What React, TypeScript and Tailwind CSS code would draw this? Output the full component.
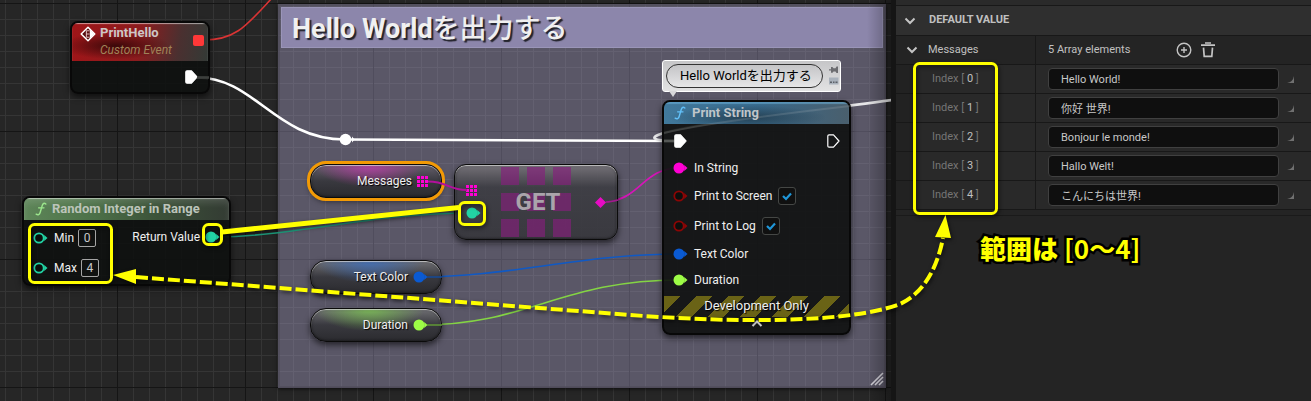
import React, { type ReactNode } from "react";

const MAGENTA = "#ff00d4";
const TEAL = "#22d3a4";
const BLUE = "#0a5ad2";
const LIME = "#9dfc46";
const MAROON = "#8c0505";

const messages = ["Hello World!", "你好 世界!", "Bonjour le monde!", "Hallo Welt!", "こんにちは世界!"];

function Pin({ color, hollow = false }: { color: string; hollow?: boolean }) {
  return (
    <svg width="15" height="12" viewBox="0 0 15 12" className="shrink-0" aria-hidden="true">
      <path d="M11.2 3 L14.5 6 L11.2 9 Z" fill={color} />
      {hollow ? (
        <circle cx="6" cy="6" r="4.7" fill="#0c0f0d" stroke={color} strokeWidth="1.8" />
      ) : (
        <circle cx="6" cy="6" r="5.5" fill={color} />
      )}
    </svg>
  );
}

function ExecPin({ filled = false }: { filled?: boolean }) {
  return (
    <svg width="13" height="14" viewBox="0 0 13 14" className="shrink-0" aria-hidden="true">
      <path
        d="M2 .8 H6.5 L12 7 L6.5 13.2 H2 Q.8 13.2 .8 12 V2 Q.8 .8 2 .8 Z"
        fill={filled ? "#fff" : "none"}
        stroke="#fff"
        strokeWidth="1.2"
        strokeLinejoin="round"
      />
    </svg>
  );
}

function ArrayPin() {
  return (
    <svg width="11" height="11" viewBox="0 0 11 11" className="shrink-0" aria-hidden="true">
      {[0, 4, 8].map((y) => [0, 4, 8].map((x) => <rect key={`${x}-${y}`} x={x} y={y} width="3" height="3" fill={MAGENTA} />))}
    </svg>
  );
}

function FunctionIcon({ color }: { color: string }) {
  return (
    <svg width="12" height="14" viewBox="0 0 12 14" fill="none" stroke={color} strokeWidth="1.5" strokeLinecap="round" aria-hidden="true">
      <path d="M10.8 2 C9.2 .6 7.8 1.4 7.2 3.6 L5.2 10.4 C4.6 12.7 3 13.4 1.2 12.2" />
      <path d="M3.6 5.8 H9" strokeWidth="1.3" />
    </svg>
  );
}

function Chevron() {
  return (
    <svg width="12" height="8" viewBox="0 0 12 8" fill="none" stroke="#c4c4c4" strokeWidth="2" aria-hidden="true">
      <path d="M1.5 1.5 L6 6 L10.5 1.5" />
    </svg>
  );
}

function Node({ className, children }: { className: string; children: ReactNode }) {
  return (
    <section
      className={`absolute overflow-hidden rounded-lg border-2 border-[#080808] bg-[#0e110f]/90 shadow-[0_3px_6px_rgba(0,0,0,0.6)] ${className}`}
    >
      {children}
    </section>
  );
}

const glass =
  "absolute flex items-center border border-[#0b0b0b] shadow-[inset_0_1px_1px_rgba(255,255,255,0.65),inset_0_0_3px_rgba(0,0,0,0.7),0_3px_6px_rgba(0,0,0,0.6)]";

function VariableNode({ name, className, children }: { name: string; className: string; children: ReactNode }) {
  return (
    <section className={`${glass} h-[34px] w-[132px] justify-end rounded-2xl pr-[13px] ${className}`}>
      <h3 className="mr-[5px] text-xs [text-shadow:1px_1px_1px_#000]">{name}</h3>
      {children}
    </section>
  );
}

function CheckRow({ id, label }: { id: string; label: string }) {
  return (
    <div className="flex items-center">
      <Pin color={MAROON} hollow />
      <label htmlFor={id} className="ml-1.5 text-xs">
        {label}
      </label>
      <span className="relative ml-1.5 flex">
        <input
          id={id}
          type="checkbox"
          defaultChecked
          className="peer size-[18px] appearance-none rounded-[3px] border border-[#454745] bg-[#101010]"
        />
        <svg
          viewBox="0 0 18 18"
          className="pointer-events-none absolute inset-0 hidden size-[18px] peer-checked:block"
          fill="none"
          stroke="#1f96d8"
          strokeWidth="2.2"
          aria-hidden="true"
        >
          <path d="M5 9 L8 12 L13 6.5" />
        </svg>
      </span>
    </div>
  );
}

function NumberRow({ id, label, value }: { id: string; label: string; value: string }) {
  return (
    <div className="flex items-center">
      <Pin color={TEAL} hollow />
      <label htmlFor={id} className="ml-1.5 text-xs">
        {label}
      </label>
      <input
        id={id}
        defaultValue={value}
        className="ml-1 h-[18px] w-[18px] rounded-[2px] border border-[#a5a5a5] bg-transparent text-center text-xs text-[#c8c8c8]"
      />
    </div>
  );
}

function Wires() {
  return (
    <svg className="absolute top-0 left-0 h-[401px] w-[891px]" viewBox="0 0 891 401" fill="none" aria-hidden="true">
      <path d="M204 40 C236 40 247 25 272 -2" stroke="#d93434" strokeWidth="1.6" />
      <path d="M197 77.5 C255 77.5 275 139.5 345 139.5 L680 141" stroke="#fff" strokeWidth="2.6" />
      <path d="M892 100 C800 113 690 123 658 135 C651 138 652 141 682 141" stroke="#e6e6e8" strokeWidth="2.6" />
      <circle cx="345.5" cy="139.5" r="5.8" fill="#fff" />
      <path d="M352 136.5 L354.5 139.5 L352 142.5 Z" fill="#fff" />
      <path d="M216 237 C300 236 370 213 471 213" stroke="#1fa584" strokeWidth="1.5" />
      <path d="M420 277 C510 277 580 254 680 254" stroke="#1059c4" strokeWidth="1.6" />
      <path d="M420 325 C530 325 560 280 680 280" stroke="#84d444" strokeWidth="1.6" />
      <path d="M601 202 C642 202 640 168 680 168" stroke="#d614b8" strokeWidth="1.7" />
    </svg>
  );
}

function PinLeads() {
  return (
    <svg className="absolute top-0 left-0 h-[401px] w-[891px]" viewBox="0 0 891 401" fill="none" aria-hidden="true">
      <path d="M428 181.5 C448 181.5 448 190 467 190" stroke="#b3109c" strokeWidth="1.8" />
      <path d="M606 202 C610 202 614 201 618 200" stroke="#a01a8c" strokeWidth="1.7" />
      <path d="M427 277 H442" stroke="#164a94" strokeWidth="1.6" />
      <path d="M427 325 H442" stroke="#5f9436" strokeWidth="1.6" />
      <path d="M197 77.5 H209" stroke="#3c3f3d" strokeWidth="2.6" />
      <path d="M664 141 H674" stroke="#555856" strokeWidth="2.6" />
      <path d="M664 133 C700 124 780 114 850 106" stroke="#d8d8d8" strokeWidth="2" opacity=".15" />
    </svg>
  );
}

function Annotations() {
  return (
    <div className="pointer-events-none absolute top-0 left-0 h-[401px] w-[1311px]">
      <svg className="size-full" viewBox="0 0 1311 401" fill="none" stroke="#ff0" strokeWidth="3" aria-hidden="true">
        <g className="[filter:drop-shadow(1px_2px_2px_rgba(0,0,0,0.6))]">
          <rect x="29.5" y="224.5" width="82" height="58" rx="5" />
          <rect x="203.5" y="224.5" width="18" height="20" rx="5" />
          <rect x="459.5" y="202.5" width="25" height="22" rx="5" />
          <rect x="914.5" y="63.5" width="82" height="150" rx="5" />
          <path d="M222 232 L459 207.5" strokeWidth="5" />
          <path
            d="M136 277 L630 315 C740 323 850 323 900 304 C926 292 938 264 943 238"
            strokeWidth="4"
            strokeDasharray="12 4"
          />
          <path d="M113 275 L136 269 V284 Z" fill="#ff0" stroke="none" />
          <path d="M945.5 215 L951 238 L935 237 Z" fill="#ff0" stroke="none" />
        </g>
      </svg>
      <p className="absolute top-[232px] left-[980px] font-['Noto_Sans_CJK_JP',sans-serif] text-[26px] leading-8 font-black whitespace-nowrap text-[#ff0] [-webkit-text-stroke:5px_#000] [paint-order:stroke_fill]">
        範囲は<span className="ml-1.5 font-bold">[0～4]</span>
      </p>
    </div>
  );
}

function Graph() {
  return (
    <main className="relative w-[891px] shrink-0 overflow-hidden bg-[#262626] text-[#efefef]">
      <div className="absolute inset-0 bg-[linear-gradient(to_right,#353535_1px,transparent_1px),linear-gradient(to_bottom,#353535_1px,transparent_1px)] bg-[size:16px_16px] bg-[position:5px_3px]" />
      <div className="absolute inset-0 bg-[linear-gradient(to_right,#151515_1px,transparent_1px),linear-gradient(to_bottom,#151515_1px,transparent_1px)] bg-[size:128px_128px] bg-[position:117px_3px]" />

      <section className="absolute top-1 left-[278px] h-96 w-[608px] border-2 border-[#4e4b59]/60 bg-[#aaa3cb]/40 p-px shadow-[0_1px_4px_rgba(0,0,0,0.7)]">
        <h1 className="border border-[#9a95b8] bg-[#8c86ab] pt-1 pl-2.5 text-[27px] leading-[35px] font-bold text-[#f0f0f0] [text-shadow:2px_2px_1px_#22222a]">
          Hello World<span className="font-medium">を出力する</span>
        </h1>
        <svg width="14" height="14" viewBox="0 0 14 14" stroke="#d4d2da" strokeWidth="1.6" className="absolute right-0 bottom-0" aria-hidden="true">
          <path d="M1 13 L13 1 M5 13 L13 5 M9 13 L13 9" />
        </svg>
      </section>

      <Wires />

      <Node className="top-[21px] left-[70px] h-[73px] w-[140px]">
        <header className="flex h-[38px] justify-between bg-[radial-gradient(ellipse_at_32%_60%,#3c0809_0%,transparent_42%),linear-gradient(100deg,#a01518_0%,#8c1c1e_50%,#4a3030_78%,#333a36_100%)] pr-1 pl-2 shadow-[inset_0_1px_1px_rgba(255,255,255,0.55)]">
          <div className="flex gap-1">
            <svg width="16" height="16" viewBox="0 0 16 16" className="mt-[3px]" aria-hidden="true">
              <path d="M8 1.2 L14.8 8 L8 14.8 L1.2 8 Z" fill="#5a1013" stroke="#fff" strokeWidth="1.5" strokeLinejoin="round" />
              <path d="M9.8 3.4 L14.4 8 L9.8 12.6 Z" fill="#fff" />
              <path d="M9.6 4.8 H6.4 V11.2 H9.6 M6.4 8 H9.6" fill="none" stroke="#d8b4b4" strokeWidth="1.1" />
            </svg>
            <div className="pt-0.5">
              <h2 className="text-[13px] leading-4 font-bold text-[#cdc6c6]">PrintHello</h2>
              <p className="text-xs leading-[18px] text-[#a08358] italic">Custom Event</p>
            </div>
          </div>
          <span className="mt-3 size-[11px] rounded-[2px] bg-[#ff3838]" />
        </header>
        <div className="flex justify-end pt-[9px] pr-2.5">
          <ExecPin filled />
        </div>
      </Node>

      <Node className="top-[196px] left-[22px] h-[90px] w-[209px]">
        <header className="flex h-[22px] items-center gap-[5px] bg-[linear-gradient(to_right,#5d8558_0%,#4c7048_35%,#3c5239_65%,#333b33_100%)] pl-[11px] shadow-[inset_0_1px_1px_rgba(255,255,255,0.5),inset_0_5px_6px_rgba(255,255,255,0.12)]">
          <FunctionIcon color="#9be58c" />
          <h2 className="text-[13px] font-bold text-[#bcc4ba]">Random Integer in Range</h2>
        </header>
        <div className="flex justify-between pt-[9px] pr-[9px] pl-[9px]">
          <div className="flex flex-col gap-3">
            <NumberRow id="min" label="Min" value="0" />
            <NumberRow id="max" label="Max" value="4" />
          </div>
          <div className="flex h-4 items-center gap-[5px]">
            <span className="text-xs">Return Value</span>
            <Pin color={TEAL} />
          </div>
        </div>
      </Node>

      <VariableNode
        name="Messages"
        className="top-[164px] left-[310px] bg-[radial-gradient(ellipse_55px_22px_at_45%_0%,#c83ab2cc,transparent),linear-gradient(to_bottom,#66606c,#39393f_50%,#2b2b2f)] outline-3 outline-[#f39a05]"
      >
        <ArrayPin />
      </VariableNode>
      <VariableNode
        name="Text Color"
        className="top-[260px] left-[310px] bg-[radial-gradient(ellipse_55px_22px_at_45%_0%,#3a70c4cc,transparent),linear-gradient(to_bottom,#707074,#39393f_50%,#2b2b2f)]"
      >
        <Pin color={BLUE} />
      </VariableNode>
      <VariableNode
        name="Duration"
        className="top-[308px] left-[310px] bg-[radial-gradient(ellipse_55px_22px_at_45%_0%,#7cc850cc,transparent),linear-gradient(to_bottom,#707074,#39393f_50%,#2b2b2f)]"
      >
        <Pin color={LIME} />
      </VariableNode>

      <section className={`${glass} top-[164px] left-[454px] h-[76px] w-[164px] rounded-xl bg-[linear-gradient(to_bottom,#777479e6,#3c3c42e6_30%,#36363be6)]`}>
        <svg width="70" height="70" viewBox="0 0 70 70" className="absolute top-0.5 left-[46px]" aria-hidden="true">
          {[0, 26, 52].map((y) => [0, 26, 52].map((x) => <rect key={`${x}-${y}`} x={x} y={y} width="18" height="18" fill="#861e7c" opacity=".65" />))}
        </svg>
        <div className="relative flex h-full w-full items-center justify-between pr-[11px] pl-[11px]">
          <div className="flex flex-col gap-[11px]">
            <ArrayPin />
            <Pin color={TEAL} />
          </div>
          <h2 className="text-2xl font-bold text-[#aaa4ab]">GET</h2>
          <svg width="11" height="11" viewBox="0 0 11 11" aria-hidden="true">
            <path d="M5.5 0 L11 5.5 L5.5 11 L0 5.5 Z" fill="#e60cc4" />
          </svg>
        </div>
      </section>

      <aside className="absolute top-[60px] left-[662px] flex h-8 w-[179px] items-center gap-1.5 rounded-[3px] border border-white bg-[linear-gradient(to_bottom,#c6c6c8,#e2e2e3)] pl-[3px] text-black">
        <p className="h-6 w-[157px] rounded-full border border-[#333] bg-[linear-gradient(to_bottom,#c4c4c6,#e6e6e7)] pl-[13px] text-[13px] leading-[22px] whitespace-nowrap">
          Hello Worldを出力する
        </p>
        <svg width="10" height="20" viewBox="0 0 10 20" fill="#6c6c70" aria-hidden="true">
          <path d="M0 3.3 H2 V1 H3.5 L4.5 2.2 H6.5 L7.5 .6 H9 V7 H7.5 L6.500 5.4 H4.5 L3.5 6.8 H2 V4.5 H0 Z" />
          <path d="M0 11.5 H9.5 V18.5 H0 Z" fill="#a9b1bb" />
          <path d="M1 15.5 H3 V17 H1 Z M4 15.5 H5.5 V17 H4 Z M6.5 15.5 H8.5 V17 H6.5 Z" fill="#5c6168" />
        </svg>
        <svg width="8" height="6" viewBox="0 0 8 6" className="absolute -bottom-1.5 left-1.5" aria-hidden="true">
          <path d="M0 0 H8 L4 6 Z" fill="#d8d8da" />
        </svg>
      </aside>

      <Node className="top-[100px] left-[662px] h-[235px] w-[189px]">
        <header className="flex h-[22px] items-center gap-1.5 bg-[radial-gradient(ellipse_at_45%_70%,#1f3340bb_0%,transparent_55%),linear-gradient(to_right,#41799c_0%,#37688a_50%,#4a5f6d_100%)] pl-2.5 shadow-[inset_0_2px_1px_rgba(110,180,220,0.55)]">
          <FunctionIcon color="#62c0f8" />
          <h2 className="text-[13px] font-bold text-[#bfc5c9]">Print String</h2>
        </header>
        <div className="flex justify-between pt-2.5 pr-[9px] pl-2.5">
          <ExecPin filled />
          <ExecPin />
        </div>
        <div className="flex flex-col gap-[11px] pt-3 pl-[9px]">
          <div className="flex h-4 items-center gap-1.5">
            <Pin color={MAGENTA} />
            <span className="text-xs">In String</span>
          </div>
          <div className="flex flex-col gap-3">
            <CheckRow id="to-screen" label="Print to Screen" />
            <CheckRow id="to-log" label="Print to Log" />
          </div>
          <div className="flex flex-col gap-2.5">
            <div className="flex h-4 items-center gap-1.5">
              <Pin color={BLUE} />
              <span className="text-xs">Text Color</span>
            </div>
            <div className="flex h-4 items-center gap-1.5">
              <Pin color={LIME} />
              <span className="text-xs">Duration</span>
            </div>
          </div>
        </div>
        <p className="mt-2 h-[21px] bg-[linear-gradient(135deg,#6a6316_25%,transparent_25%,transparent_50%,#6a6316_50%,#6a6316_75%,transparent_75%)] bg-[size:32px_32px] text-center text-[13px] leading-5 [text-shadow:1px_1px_1px_#000]">
          Development Only
        </p>
        <button aria-label="Collapse" className="flex w-full justify-center pt-[3px]">
          <svg width="12" height="7" viewBox="0 0 12 7" fill="none" stroke="#e4e4e4" strokeWidth="2" aria-hidden="true">
            <path d="M1.5 6 L6 1.5 L10.5 6" />
          </svg>
        </button>
      </Node>

      <PinLeads />
      <div className="pointer-events-none absolute inset-y-0 right-0 w-6 bg-[linear-gradient(to_right,transparent,rgba(0,0,0,0.3))]" />
    </main>
  );
}

function DetailsPanel() {
  return (
    <aside className="min-w-0 flex-1 border-l-[5px] border-[#151515] bg-[#242424] text-[11px] text-[#c0c0c0]">
      <div className="h-1.5 border-b border-[#181818] bg-[#2a2a2a]" />
      <header className="flex h-[30px] items-center gap-[13px] border-b border-[#181818] bg-[#2f2f2f] pl-2">
        <button aria-label="Toggle default value">
          <Chevron />
        </button>
        <h2 className="font-bold">DEFAULT VALUE</h2>
      </header>
      <div className="flex h-[29px] border-b border-[#181818]">
        <div className="flex w-[140px] shrink-0 items-center gap-2.5 border-r border-[#181818] pl-2.5">
          <button aria-label="Toggle messages">
            <Chevron />
          </button>
          <h3>Messages</h3>
        </div>
        <div className="flex items-center pl-3">
          <span className="w-32">5 Array elements</span>
          <button aria-label="Add element">
            <svg width="16" height="16" viewBox="0 0 16 16" fill="none" stroke="#c4c4c4" strokeWidth="1.4" aria-hidden="true">
              <circle cx="8" cy="8" r="6.8" />
              <path d="M8 5 V11 M5 8 H11" />
            </svg>
          </button>
          <button aria-label="Remove all elements" className="ml-2">
            <svg width="16" height="16" viewBox="0 0 16 16" fill="none" stroke="#c4c4c4" strokeWidth="1.7" aria-hidden="true">
              <path d="M1 3.2 H15 M5 1 H11 M3.5 5.6 L4.2 14.3 H11.8 L12.500 5.6" />
            </svg>
          </button>
        </div>
      </div>
      <ul>
        {messages.map((message, i) => (
          <li key={message} className="flex h-[29px] border-b border-[#181818] bg-[linear-gradient(to_right,#222_17px,#292929_18px)]">
            <label htmlFor={`message-${i}`} className="flex w-[140px] shrink-0 items-center border-r border-[#181818] pl-9 whitespace-pre text-[#757575]">
              Index [ <span className="text-[#c0c0c0]">{i}</span> ]
            </label>
            <div className="flex flex-1 items-center gap-2 pr-4 pl-3">
              <input
                id={`message-${i}`}
                defaultValue={message}
                className="h-[22px] min-w-0 flex-1 rounded border border-[#404040] bg-[#0f0f0f] px-3 text-[#c8c8c8]"
              />
              <svg width="8" height="8" viewBox="0 0 8 8" className="mt-0.5" aria-hidden="true">
                <path d="M7 0 V7 H0 Q6 6 7 0 Z" fill="#707070" />
              </svg>
            </div>
          </li>
        ))}
      </ul>
      <div className="h-1.5 border-b border-[#1a1a1a]" />
    </aside>
  );
}

export default function App() {
  return (
    <div className="relative flex min-h-screen overflow-hidden bg-[#242424] font-[Roboto,'Noto_Sans_CJK_JP',sans-serif]">
      <Graph />
      <DetailsPanel />
      <Annotations />
    </div>
  );
}
